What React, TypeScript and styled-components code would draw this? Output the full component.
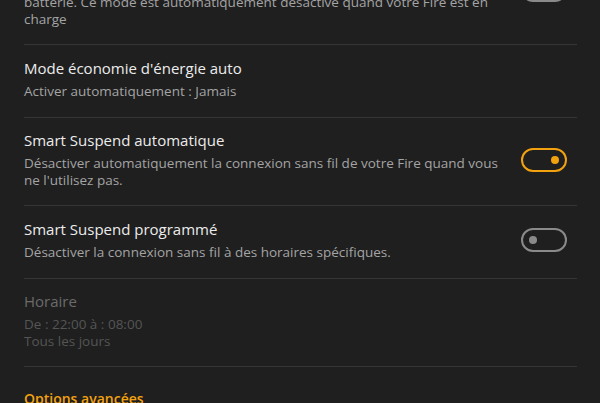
import styled, { createGlobalStyle } from "styled-components";

const GlobalStyle = createGlobalStyle`
  html, body {
    margin: 0;
    padding: 0;
    background: #1f1f1f;
    overflow: hidden;
  }
  body {
    font-family: "Open Sans", "Noto Sans", sans-serif;
  }
`

type Setting = {
    title: string
    desc: React.ReactNode
    toggle?: boolean
    disabled?: boolean
}

const settings: Setting[] = [
    {
        title: "Mode économie d'énergie",
        desc: <>Limite certaines fonctionnalités pour économiser la<br/>batterie. Ce mode est automatiquement désactivé quand votre Fire est en charge</>,
        toggle: false,
    },
    {
        title: "Mode économie d'énergie auto",
        desc: "Activer automatiquement : Jamais",
    },
    {
        title: "Smart Suspend automatique",
        desc: "Désactiver automatiquement la connexion sans fil de votre Fire quand vous ne l'utilisez pas.",
        toggle: true,
    },
    {
        title: "Smart Suspend programmé",
        desc: "Désactiver la connexion sans fil à des horaires spécifiques.",
        toggle: false,
    },
    {
        title: "Horaire",
        desc: <>De : 22:00 à : 08:00<br/>Tous les jours</>,
        disabled: true,
    },
]

export default function App() {
    return (
        <>
            <GlobalStyle/>
            <Page>
                <List>
                    {settings.map((s) => (
                        <Row key={s.title}>
                            <TextCol>
                                <Title $disabled={s.disabled}>{s.title}</Title>
                                <Desc $disabled={s.disabled}>{s.desc}</Desc>
                            </TextCol>
                            {s.toggle !== undefined && (
                                <Toggle $on={s.toggle}>
                                    <Dot $on={s.toggle}/>
                                </Toggle>
                            )}
                        </Row>
                    ))}
                </List>
                <SectionHeader>Options avancées</SectionHeader>
            </Page>
        </>
    )
}

const Page = styled.div`
  width: 600px;
  height: 403px;
  overflow: hidden;
  background: #1f1f1f;
  padding: 0 23px 0 24px;
  box-sizing: border-box;
`

const List = styled.div`
  margin-top: -60px;
  display: flex;
  flex-direction: column;
`

const Row = styled.div`
  display: flex;
  align-items: center;
  min-height: 73px;
  padding: 12px 0 16px;
  box-sizing: border-box;
  border-bottom: 1px solid #353535;
`

const TextCol = styled.div`
  flex: 1;
  min-width: 0;
  max-width: 490px;
  display: flex;
  flex-direction: column;
  gap: 5px;
`

const Title = styled.div<{ $disabled?: boolean }>`
  font-size: 15px;
  line-height: 20px;
  color: ${p => p.$disabled ? "#6b6b6b" : "#ececec"};
`

const Desc = styled.div<{ $disabled?: boolean }>`
  font-size: 13.5px;
  line-height: 17px;
  color: ${p => p.$disabled ? "#555555" : "#a4a4a4"};
`

const Toggle = styled.div<{ $on: boolean }>`
  margin-left: auto;
  margin-right: 10px;
  width: 46px;
  height: 24px;
  box-sizing: border-box;
  border: 2px solid ${p => p.$on ? "#f3a20f" : "#8a8a8a"};
  border-radius: 12px;
  display: flex;
  align-items: center;
  justify-content: ${p => p.$on ? "flex-end" : "flex-start"};
  padding: 0 6px;
  flex-shrink: 0;
`

const Dot = styled.div<{ $on: boolean }>`
  width: 8px;
  height: 8px;
  border-radius: 50%;
  background: ${p => p.$on ? "#f3a20f" : "#8a8a8a"};
`

const SectionHeader = styled.div`
  padding-top: 22px;
  font-size: 14px;
  line-height: 20px;
  font-weight: 600;
  color: #f3a20f;
`
